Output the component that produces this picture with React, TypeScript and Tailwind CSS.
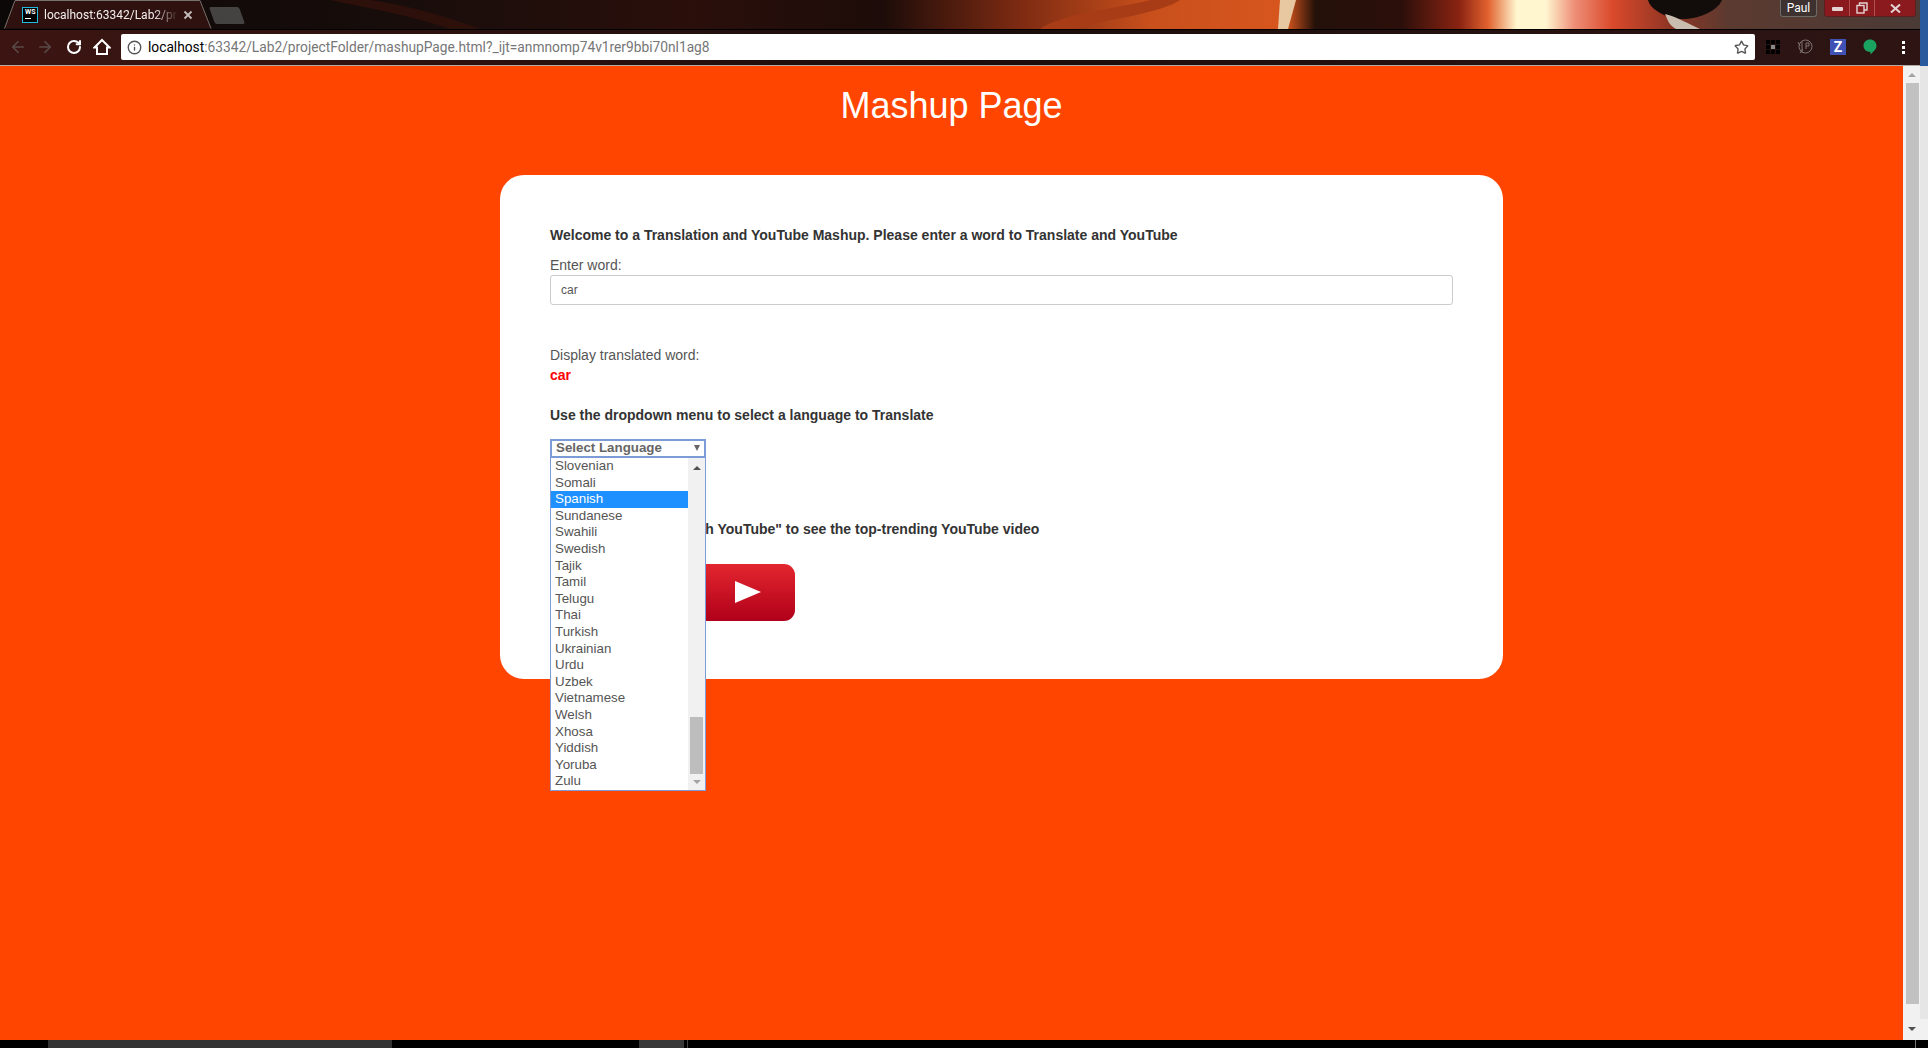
import { ArrowLeft, ArrowRight, RotateCw, Info, Star } from 'lucide-react';

const languages = [
  'Slovenian',
  'Somali',
  'Spanish',
  'Sundanese',
  'Swahili',
  'Swedish',
  'Tajik',
  'Tamil',
  'Telugu',
  'Thai',
  'Turkish',
  'Ukrainian',
  'Urdu',
  'Uzbek',
  'Vietnamese',
  'Welsh',
  'Xhosa',
  'Yiddish',
  'Yoruba',
  'Zulu',
];

function Wallpaper() {
  return (
    <svg className="absolute left-0 top-0" width="1920" height="29" viewBox="0 0 1920 29" preserveAspectRatio="none">
      <defs>
        <linearGradient id="wall" x1="0" y1="0" x2="1920" y2="0" gradientUnits="userSpaceOnUse">
          <stop offset="0" stopColor="#0b0807" />
          <stop offset="0.2" stopColor="#170d0b" />
          <stop offset="0.36" stopColor="#2a0f0b" />
          <stop offset="0.46" stopColor="#1d0c09" />
          <stop offset="0.53" stopColor="#7c2a12" />
          <stop offset="0.6" stopColor="#c9501c" />
          <stop offset="0.67" stopColor="#d8561e" />
          <stop offset="0.685" stopColor="#241109" />
          <stop offset="0.73" stopColor="#2c0f0a" />
          <stop offset="0.76" stopColor="#8a2312" />
          <stop offset="0.775" stopColor="#e2622e" />
          <stop offset="0.79" stopColor="#fff6d0" />
          <stop offset="0.805" stopColor="#fff6d0" />
          <stop offset="0.82" stopColor="#ee8f78" />
          <stop offset="0.84" stopColor="#d9492a" />
          <stop offset="0.87" stopColor="#8f3524" />
          <stop offset="0.9" stopColor="#5b3a30" />
          <stop offset="1" stopColor="#4a3a36" />
        </linearGradient>
      </defs>
      <rect width="1920" height="29" fill="url(#wall)" />
      <path d="M330 0 C380 10 420 18 450 29 L480 29 C440 14 400 4 370 0 Z" fill="#2e100b" />
      <path d="M1040 29 C1060 14 1120 8 1150 0 L1180 0 C1160 14 1100 20 1075 29 Z" fill="#a83c16" />
      <path d="M1280 0 L1296 0 L1288 29 L1278 29 Z" fill="#e8c8a0" />
      <path d="M1648 0 L1722 0 C1716 14 1690 22 1672 18 C1660 14 1650 8 1648 0 Z" fill="#120c0a" />
      <path d="M1665 14 C1680 18 1688 24 1700 29 L1676 29 C1668 24 1668 20 1665 14 Z" fill="#c9bdb0" />
    </svg>
  );
}

function Tab() {
  return (
    <div className="relative h-[29px] w-[214px] shrink-0 ml-[4px]">
      <svg className="absolute left-0 top-0" width="214" height="29" viewBox="0 0 214 29">
        <path d="M0.5 28.5 L11 0.5 L196 0.5 L207 28.5" fill="#2f1210" stroke="#77706c" strokeWidth="1" />
      </svg>
      <div className="relative flex h-full items-center pl-[18px]">
        <div className="flex h-[16px] w-[16px] shrink-0 flex-col border border-[#22b8e0] bg-black pl-[2px] pt-[1px] text-[7px] font-bold leading-[7px] text-white">
          WS
          <span className="mt-[2px] h-[1px] w-[6px] bg-white"></span>
        </div>
        <span className="ml-[6px] w-[134px] overflow-hidden whitespace-nowrap text-[12px] text-[#f4eeee] [mask-image:linear-gradient(to_right,black_82%,transparent)]">
          localhost:63342/Lab2/projectFolder
        </span>
        <svg className="ml-[5px]" width="10" height="10" viewBox="0 0 10 10">
          <path d="M1.5 1.5 L8.5 8.5 M8.5 1.5 L1.5 8.5" stroke="#c4bcbc" strokeWidth="1.8" />
        </svg>
      </div>
    </div>
  );
}

function WindowControls() {
  return (
    <div className="ml-auto mr-[4px] flex h-[17px] items-start">
      <div className="flex h-[17px] w-[37px] items-center justify-center rounded-b-[3px] border border-t-0 border-[#6e6a68] bg-[#3d3230] text-[12px] text-white">
        Paul
      </div>
      <div className="ml-[7px] flex h-[17px] w-[92px] rounded-b-[3px] bg-[#8a1a1e] border border-t-0 border-[#5a2020]">
        <div className="flex w-[25px] items-center justify-center border-r border-[#b05050]">
          <span className="mt-[2px] h-[4px] w-[11px] rounded-[1px] bg-[#e4d4d4]"></span>
        </div>
        <div className="flex w-[25px] items-center justify-center border-r border-[#b05050]">
          <svg width="12" height="12" viewBox="0 0 12 12" fill="none" stroke="#e4d4d4" strokeWidth="1.4">
            <rect x="1" y="3.5" width="7" height="7.5" />
            <path d="M3.5 3.5 V1 H11 V8 H8" />
          </svg>
        </div>
        <div className="flex flex-1 items-center justify-center">
          <svg width="11" height="9" viewBox="0 0 11 9">
            <path d="M1 0.5 L10 8.5 M10 0.5 L1 8.5" stroke="#e4d4d4" strokeWidth="2" />
          </svg>
        </div>
      </div>
    </div>
  );
}

function Toolbar() {
  return (
    <div className="flex h-[36px] items-center border-b border-[#b5aba6] bg-gradient-to-r from-[#3c1512] via-[#1b0d0b] to-[#2e1514] pb-[1px]">
      <div className="flex w-[121px] shrink-0 items-center pl-[9px]">
        <ArrowLeft className="h-[18px] w-[18px] text-[#5a4a48]" strokeWidth={2.2} />
        <ArrowRight className="ml-[9px] h-[18px] w-[18px] text-[#5a4a48]" strokeWidth={2.2} />
        <RotateCw className="ml-[12px] h-[16px] w-[16px] text-white" strokeWidth={3} />
        <svg className="ml-[11px]" width="18" height="18" viewBox="0 0 18 18" fill="none" stroke="#ffffff" strokeWidth="2">
          <path d="M9 2 L16.5 9.5 H14 V16 H4 V9.5 H1.5 Z" />
        </svg>
      </div>
      <div className="flex h-[26px] w-[1634px] shrink-0 items-center rounded-[2px] bg-white pl-[6px] pr-[6px]">
        <Info className="h-[15px] w-[15px] text-[#555555]" strokeWidth={2.2} />
        <span className="ml-[6px] whitespace-nowrap font-['Roboto',sans-serif] text-[13.75px] text-[#767676]">
          <span className="text-black">localhost</span>:63342/Lab2/projectFolder/mashupPage.html?_ijt=anmnomp74v1rer9bbi70nl1ag8
        </span>
        <Star className="ml-auto h-[15px] w-[15px] text-[#555555]" strokeWidth={2.2} />
      </div>
      <div className="flex flex-1 items-center pl-[11px]">
        <svg width="14" height="14" viewBox="0 0 14 14">
          <rect width="14" height="14" fill="#000000" />
          <path d="M4.5 0 V14 M9.5 0 V14 M0 4.5 H14 M0 9.5 H14" stroke="#2e1514" strokeWidth="0.8" />
          <rect x="5" y="5" width="4" height="4" fill="#8a8a8a" />
        </svg>
        <svg className="ml-[17px]" width="16" height="16" viewBox="0 0 16 16" fill="none" stroke="#7d7371" strokeWidth="1">
          <circle cx="8.5" cy="7.5" r="6.5" />
          <path d="M5 2.5 V14 M3 7 L1 3 M9 4 V10 M9 4 H12 V7 H9 M3 14 L6 10" />
        </svg>
        <div className="ml-[17px] flex h-[16px] w-[16px] items-center justify-center bg-[#3f51b5] text-[14px] font-bold leading-none text-white">
          Z
        </div>
        <svg className="ml-[17px]" width="14" height="16" viewBox="0 0 14 16">
          <path d="M7 0.5 C10.6 0.5 13.5 3.2 13.5 6.8 C13.5 10.2 10.5 12.6 7.5 15.5 V13 C3.5 13 0.5 10.4 0.5 6.8 C0.5 3.2 3.4 0.5 7 0.5 Z" fill="#1aa260" />
        </svg>
        <div className="ml-[25px] flex flex-col gap-[2px]">
          <span className="h-[3px] w-[3px] bg-white"></span>
          <span className="h-[3px] w-[3px] bg-white"></span>
          <span className="h-[3px] w-[3px] bg-white"></span>
        </div>
      </div>
    </div>
  );
}

function LanguageList() {
  return (
    <div className="absolute left-0 top-[19px] z-10 flex h-[333px] w-[156px] border border-t-0 border-[#7b9cd6] bg-white">
      <ul className="w-[137px] shrink-0 overflow-hidden">
        {languages.map((lang) => (
          <li
            key={lang}
            className={
              lang === 'Spanish'
                ? 'h-[16.6px] bg-[#1e90ff] pl-[4px] text-[13.33px] leading-[16.6px] text-white'
                : 'h-[16.6px] pl-[4px] text-[13.33px] leading-[16.6px] text-[#555555]'
            }
          >
            {lang}
          </li>
        ))}
      </ul>
      <div className="flex w-[17px] flex-col items-center justify-between bg-[#f1f1f1] pb-[6px] pt-[8px]">
        <span className="h-0 w-0 border-x-[4px] border-b-[4px] border-x-transparent border-b-[#505050]"></span>
        <span className="mt-auto mb-[6px] h-[57px] w-[13px] bg-[#bdbdbd]"></span>
        <span className="h-0 w-0 border-x-[4px] border-t-[4px] border-x-transparent border-t-[#a3a3a3]"></span>
      </div>
    </div>
  );
}

function PageScrollbar() {
  return (
    <div className="flex w-[25px] shrink-0">
      <div className="flex w-[17px] flex-col items-center bg-[#f1f1f1]">
        <span className="mt-[7px] h-0 w-0 border-x-[4px] border-b-[4px] border-x-transparent border-b-[#a3a3a3]"></span>
        <span className="ml-px mt-[6px] h-[921px] w-[13px] bg-[#c1c1c1]"></span>
        <span className="mt-[23px] h-0 w-0 border-x-[4px] border-t-[4px] border-x-transparent border-t-[#505050]"></span>
      </div>
      <div className="flex w-[8px] flex-col bg-[#f1f1f1]">
        <span className="h-[953px] bg-[#e6e6e6]"></span>
      </div>
    </div>
  );
}

export default function App() {
  return (
    <div className="flex h-screen w-screen flex-col overflow-hidden bg-black font-['Liberation_Sans',Arial,sans-serif]">
      {/* Browser chrome */}
      <div className="flex h-[66px] shrink-0 font-['Roboto',sans-serif]">
        <div className="w-[1920px] shrink-0">
          <div className="relative flex h-[30px] items-start overflow-hidden">
            <Wallpaper />
            <div className="relative flex h-[29px] w-full items-start">
              <Tab />
              <div className="-ml-[6px] mt-[7px] h-[17px] w-[30px] shrink-0 skew-x-[20deg] rounded-[2px] bg-[#454341]"></div>
              <WindowControls />
            </div>
          </div>
          <Toolbar />
        </div>
        <div className="flex-1 bg-[#2a5a9e]"></div>
      </div>

      {/* Page */}
      <div className="flex h-[974px] shrink-0">
        <div className="flex-1 bg-[#ff4500]">
          <h1 className="pt-[19px] text-center text-[36px] font-normal leading-[42px] text-white">Mashup Page</h1>
          <div className="ml-[500px] mt-[48px] h-[504px] w-[1003px] rounded-[24px] bg-white px-[50px] pt-[50px] text-[14px] leading-[20px] text-[#333333]">
            <p className="font-bold">Welcome to a Translation and YouTube Mashup. Please enter a word to Translate and YouTube</p>
            <p className="mt-[10px] text-[#555555]">Enter word:</p>
            <div className="flex h-[30px] w-[903px] items-center rounded-[3px] border border-[#cccccc] px-[10px] text-[12px] text-[#555555]">
              car
            </div>
            <p className="mt-[40px] text-[#555555]">Display translated word:</p>
            <p className="font-bold text-[#ff0000]">car</p>
            <p className="mt-[20px] font-bold">Use the dropdown menu to select a language to Translate</p>
            <div className="relative mt-[14px] h-[19px] w-[156px]">
              <div className="flex h-[19px] w-[156px] items-center justify-between border-2 border-[#7b9cd6] pb-[1px] pl-[4px] pr-[4px] text-[13.33px] font-bold leading-none text-[#666666]">
                Select Language
                <span className="h-0 w-0 border-x-[3.5px] border-t-[6px] border-x-transparent border-t-[#666666]"></span>
              </div>
              <LanguageList />
            </div>
            <p className="mt-[61px] whitespace-nowrap font-bold">
              Please press on "Search YouTube" to see the top-trending YouTube video
            </p>
            <svg className="mt-[25px]" width="245" height="57" viewBox="0 0 245 57">
              <defs>
                <linearGradient id="yt" x1="0" y1="0" x2="0" y2="1">
                  <stop offset="0" stopColor="#e3262e" />
                  <stop offset="1" stopColor="#b0001a" />
                </linearGradient>
              </defs>
              <rect x="142" y="0" width="103" height="57" rx="11" fill="url(#yt)" />
              <path d="M185 17 L211 28 L185 39 Z" fill="#ffffff" />
            </svg>
          </div>
        </div>
        <PageScrollbar />
      </div>

      {/* Taskbar, cut off by the bottom of the shot */}
      <div className="flex h-[8px] shrink-0 overflow-hidden bg-black text-[13px] text-white">
        <div className="ml-[48px] w-[344px] bg-[#333333]"></div>
        <div className="ml-[247px] w-[45px] bg-[#383838]"></div>
        <div className="ml-[3px] w-px bg-[#444444]"></div>
        <span className="ml-[1123px] mt-[6px] w-[60px] whitespace-nowrap leading-[14px]">12:03 AM</span>
        <div className="ml-[44px] w-px bg-[#777777]"></div>
      </div>
    </div>
  );
}
